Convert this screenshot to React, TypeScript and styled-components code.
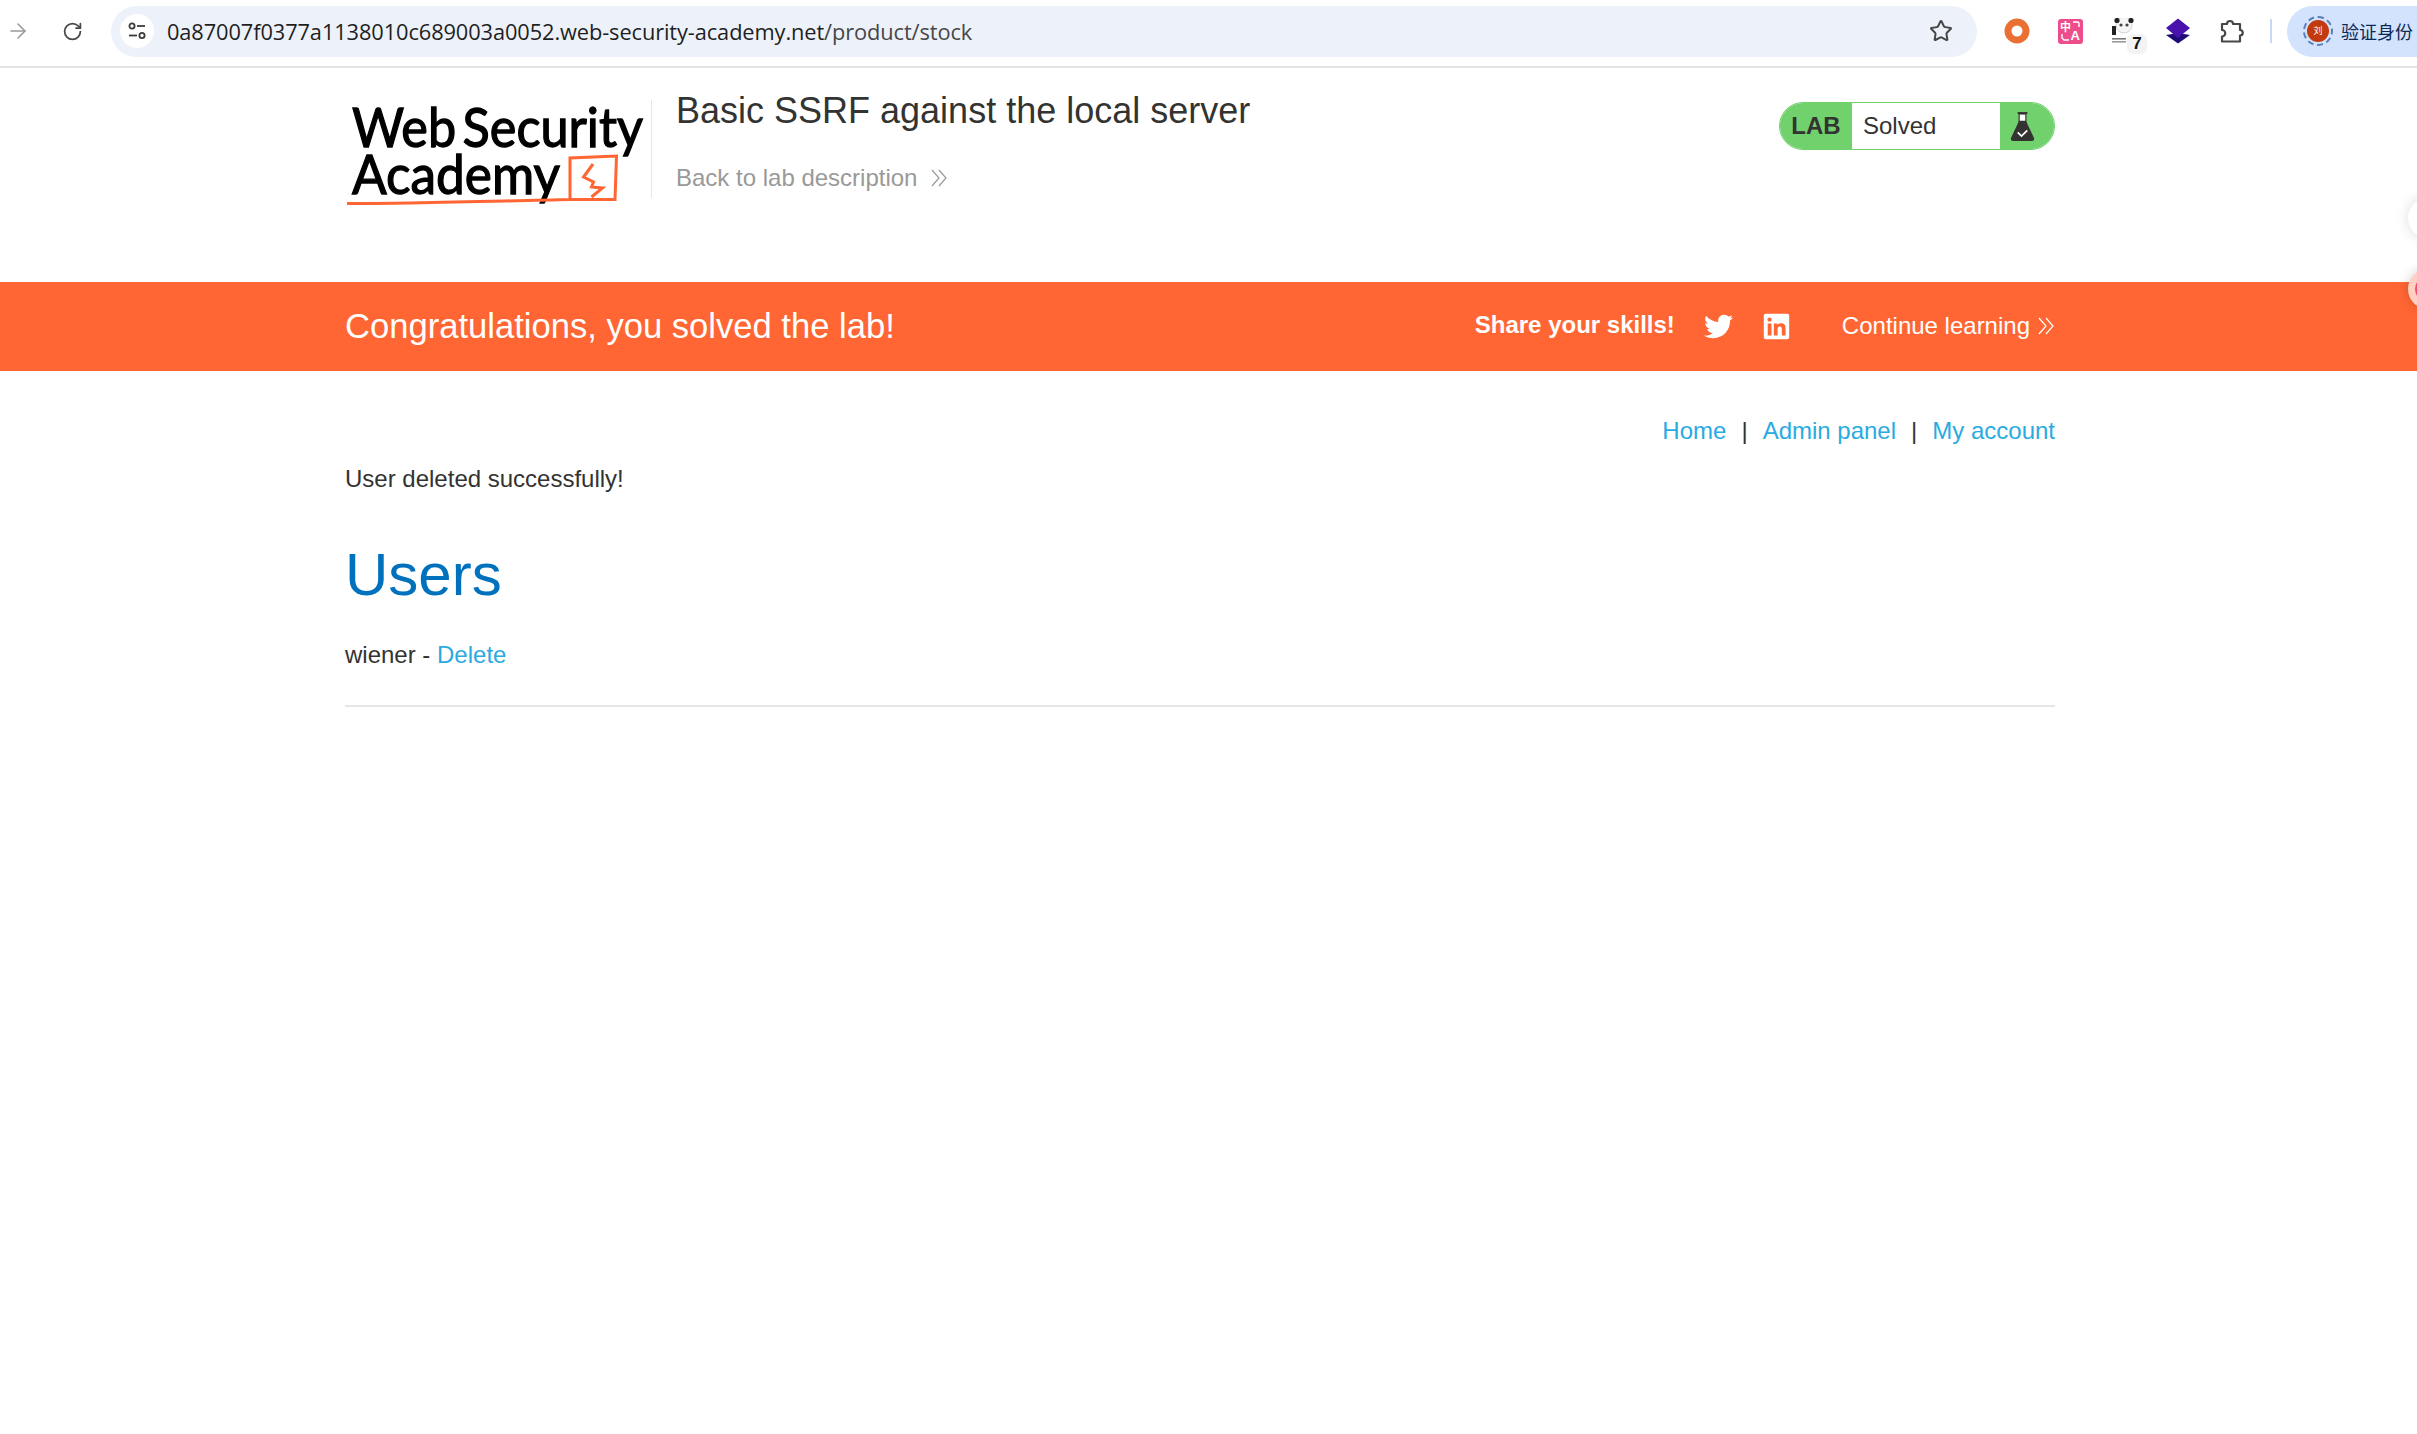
import styled, { createGlobalStyle } from "styled-components";
import { ArrowRight, RotateCw, Star } from "lucide-react";
import { FaTwitter, FaLinkedin } from "react-icons/fa";

const GlobalStyle = createGlobalStyle`
  html, body {
    margin: 0;
    padding: 0;
    background: #fff;
  }
  body {
    width: 2417px;
    height: 1434px;
    overflow: hidden;
    font-family: "Liberation Sans", Arial, sans-serif;
    font-size: 24px;
    color: #333332;
  }
`;

const Chevrons = ({ size, color }: { size: number; color: string }) => (
  <svg width={size} height={size} viewBox="0 0 18 18" fill="none" stroke={color} strokeWidth="1.2">
    <polyline points="2,1 9,9 2,17" />
    <polyline points="9,1 16,9 9,17" />
  </svg>
);

export default function App() {
  return (
    <Page>
      <GlobalStyle />
      <BrowserBar>
        <NavIcon $left={6} $width={24}>
          <ArrowRight size={24} color="#9a9a9a" strokeWidth={1.6} />
        </NavIcon>
        <NavIcon $left={30} $width={24}>
          <RotateCw size={21} color="#474747" strokeWidth={2} />
        </NavIcon>
        <UrlPill>
          <SiteInfo>
            <svg width="20" height="20" viewBox="0 0 20 20" fill="none" stroke="#3c3c3c" strokeWidth="1.8">
              <circle cx="5" cy="5" r="2.6" />
              <line x1="10" y1="5" x2="18" y2="5" />
              <line x1="2" y1="14.5" x2="10" y2="14.5" />
              <circle cx="15" cy="14.5" r="2.6" />
            </svg>
          </SiteInfo>
          <UrlText>
            0a87007f0377a1138010c689003a0052.web-security-academy.net<UrlPath>/product/stock</UrlPath>
          </UrlText>
          <Star size={24} color="#474747" strokeWidth={2} />
        </UrlPill>
        <Extensions>
          <svg width="26" height="26" viewBox="0 0 26 26">
            <circle cx="13" cy="13" r="9" fill="none" stroke="#e96f33" strokeWidth="7" />
          </svg>
          <TranslateIcon>
            <svg width="25" height="25" viewBox="0 0 25 25" fill="none" stroke="#fff" strokeWidth="1.4">
              <path d="M15 3 h5 l1 1 v4" />
              <path d="M4 15 v4 l2 2 h5" />
            </svg>
            <TranslateHan>中</TranslateHan>
            <TranslateLatin>A</TranslateLatin>
          </TranslateIcon>
          <PandaIcon>
            <svg width="24" height="26" viewBox="0 0 24 26">
              <circle cx="13" cy="7" r="8" fill="#f6f6f6" stroke="#bbb" strokeWidth="0.6" />
              <circle cx="6" cy="2.5" r="2.6" fill="#222" />
              <circle cx="20" cy="2.5" r="2.6" fill="#222" />
              <circle cx="10" cy="7" r="1.6" fill="#444" />
              <circle cx="16" cy="7" r="1.6" fill="#444" />
              <rect x="1" y="8" width="4" height="9" fill="#222" />
              <rect x="1" y="20" width="14" height="1.6" fill="#777" />
              <rect x="1" y="23" width="14" height="1.6" fill="#999" />
            </svg>
            <CountBadge>7</CountBadge>
          </PandaIcon>
          <svg width="26" height="26" viewBox="0 0 26 26">
            <polygon points="13,15 1,17 13,25.5 25,17" fill="#1f0a78" />
            <polygon points="13,0.5 1,10 13,20 25,10" fill="#4a12ac" />
          </svg>
          <svg width="26" height="26" viewBox="0 0 26 26" fill="none" stroke="#474747" strokeWidth="2.2" strokeLinejoin="round">
            <path d="M3 6 h5 a3 3 0 0 1 6 0 h7 v6 a2.6 2.6 0 0 1 0 5.5 v6 H3 v-5 a3.2 3.2 0 0 0 0 -6.5 z" />
          </svg>
        </Extensions>
        <BarDivider />
        <ProfileChip>
          <AvatarRing>
            <Avatar>刘</Avatar>
          </AvatarRing>
          <span>验证身份</span>
        </ProfileChip>
      </BrowserBar>

      <Container>
        <LabHeader>
          <Logo>
            <svg width="300" height="110" viewBox="0 0 300 110">
              <LogoText x="7" y="47" textLength="291" lengthAdjust="spacingAndGlyphs">
                Web Security
              </LogoText>
              <LogoText x="7" y="94" textLength="208" lengthAdjust="spacingAndGlyphs">
                Academy
              </LogoText>
              <path
                d="M2 103.5 C70 103.5 150 101 225 99.5 L225 58 L271.5 56 L270 99.5 L226 99.5"
                fill="none"
                stroke="#ff6633"
                strokeWidth="3"
              />
              <polyline
                points="248,64 238.5,77 248.5,82 246.5,87 257.5,88 246.5,97"
                fill="none"
                stroke="#ff6633"
                strokeWidth="3"
              />
            </svg>
          </Logo>
          <TitleBlock>
            <LabTitle>Basic SSRF against the local server</LabTitle>
            <BackLink>
              Back to lab description
              <Chevrons size={18} color="#999" />
            </BackLink>
          </TitleBlock>
          <LabBadge>
            <BadgeLabel>LAB</BadgeLabel>
            <BadgeStatus>Solved</BadgeStatus>
            <BadgeIcon>
              <svg width="25" height="31" viewBox="0 0 26 32">
                <rect x="8" y="1" width="10" height="2" fill="#333332" />
                <rect x="9.5" y="3" width="7" height="9" fill="#fff" stroke="#333332" strokeWidth="1.2" />
                <path d="M9.5 10 L1 28 Q0.5 31 3 31 H23 Q25.5 31 25 28 L16.5 10 Z" fill="#333332" />
                <polyline points="8,22 12,26 18,20" fill="none" stroke="#fff" strokeWidth="1.8" />
              </svg>
            </BadgeIcon>
          </LabBadge>
        </LabHeader>
      </Container>

      <Banner>
        <BannerInner>
          <BannerTitle>Congratulations, you solved the lab!</BannerTitle>
          <ShareGroup>
            <ShareLabel>Share your skills!</ShareLabel>
            <FaTwitter size={29} color="#fff" />
            <FaLinkedin size={29} color="#fff" />
          </ShareGroup>
          <ContinueLink>
            Continue learning
            <Chevrons size={18} color="#fff" />
          </ContinueLink>
        </BannerInner>
      </Banner>

      <Container>
        <TopLinks>
          <Link>Home</Link>
          <Sep>|</Sep>
          <Link>Admin panel</Link>
          <Sep>|</Sep>
          <Link>My account</Link>
        </TopLinks>
        <Message>User deleted successfully!</Message>
        <Heading>Users</Heading>
        <UserRow>
          wiener - <Link>Delete</Link>
        </UserRow>
        <Rule />
      </Container>

      <FloatingWhite />
      <FloatingPink />
    </Page>
  );
}

const Page = styled.div`
  position: relative;
  width: 2417px;
  height: 1434px;
  overflow: hidden;
  background: #fff;
`;

const BrowserBar = styled.div`
  display: flex;
  align-items: center;
  height: 62px;
  padding-bottom: 4px;
  border-bottom: 2px solid #e3e3e3;
  overflow: hidden;
`;

const NavIcon = styled.div<{ $left: number; $width: number }>`
  display: flex;
  justify-content: center;
  width: ${(p) => p.$width}px;
  margin-left: ${(p) => p.$left}px;
  flex: none;
`;

const UrlPill = styled.div`
  display: flex;
  align-items: center;
  width: 1866px;
  height: 51px;
  margin-left: 27px;
  padding: 0 24px 0 9px;
  box-sizing: border-box;
  background: #edf2fa;
  border-radius: 26px;
  flex: none;
`;

const SiteInfo = styled.div`
  display: flex;
  align-items: center;
  justify-content: center;
  width: 34px;
  height: 34px;
  background: #fff;
  border-radius: 50%;
  flex: none;
`;

const UrlText = styled.div`
  flex: 1;
  margin-left: 13px;
  font-family: "Open Sans", sans-serif;
  font-size: 21.8px;
  letter-spacing: -0.1px;
  color: #1f1f1f;
  white-space: nowrap;
`;

const UrlPath = styled.span`
  color: #474747;
`;

const Extensions = styled.div`
  display: flex;
  align-items: center;
  gap: 28px;
  margin-left: 27px;
  flex: none;
`;

const TranslateIcon = styled.div`
  position: relative;
  width: 25px;
  height: 25px;
  background: #ee4d8c;
  border-radius: 3px;
  color: #fff;
  font-weight: 700;
  line-height: 12px;
  svg {
    display: block;
  }
`;

const TranslateHan = styled.span`
  position: absolute;
  left: 2px;
  top: 1px;
  font-family: "Noto Sans CJK SC", sans-serif;
  font-size: 11px;
`;

const TranslateLatin = styled.span`
  position: absolute;
  right: 3px;
  bottom: 2px;
  font-family: "Liberation Sans", sans-serif;
  font-size: 13px;
`;

const PandaIcon = styled.div`
  position: relative;
  display: flex;
  width: 26px;
  height: 26px;
`;

const CountBadge = styled.div`
  position: absolute;
  right: -10px;
  bottom: -10px;
  width: 20px;
  height: 20px;
  border-radius: 6px;
  background: #f3f3f3;
  text-align: center;
  font-size: 17px;
  font-weight: 700;
  line-height: 20px;
  color: #111;
`;

const BarDivider = styled.div`
  width: 2px;
  height: 24px;
  margin-left: 25px;
  background: #c7d9f5;
  flex: none;
`;

const ProfileChip = styled.div`
  display: flex;
  align-items: center;
  gap: 8px;
  height: 51px;
  margin-left: 15px;
  padding-left: 16px;
  width: 200px;
  background: #d3e3fd;
  border-radius: 26px 0 0 26px;
  font-family: "Noto Sans CJK SC", sans-serif;
  font-size: 18px;
  white-space: nowrap;
  color: #0b2a55;
  flex: none;
`;

const AvatarRing = styled.div`
  display: flex;
  align-items: center;
  justify-content: center;
  width: 26px;
  height: 26px;
  border: 2px dashed #5b7fb5;
  border-radius: 50%;
  flex: none;
`;

const Avatar = styled.div`
  width: 22px;
  height: 22px;
  border-radius: 50%;
  background: #c23a0e;
  color: #fff;
  font-size: 9px;
  line-height: 22px;
  text-align: center;
`;

const Container = styled.div`
  width: 1710px;
  margin-left: 345px;
`;

const LabHeader = styled.div`
  display: flex;
  align-items: flex-start;
  height: 214px;
  box-sizing: border-box;
  padding-top: 21px;
`;

const Logo = styled.div`
  display: flex;
  width: 306px;
  height: 98px;
  margin-top: 11px;
  border-right: 1px solid #e6e6e6;
  flex: none;
  svg {
    overflow: visible;
  }
`;

const LogoText = styled.text`
  font-family: "Lato", "Open Sans", sans-serif;
  font-size: 55px;
  font-weight: 400;
  word-spacing: -7px;
  fill: #000;
  stroke: #000;
  stroke-width: 1.3px;
`;

const TitleBlock = styled.div`
  margin-left: 24px;
  flex: 1;
`;

const LabTitle = styled.h2`
  margin: 0;
  font-size: 36px;
  font-weight: 400;
  line-height: 44px;
  color: #333332;
`;

const BackLink = styled.div`
  display: flex;
  align-items: center;
  gap: 13px;
  margin-top: 27px;
  line-height: 36px;
  color: #999;
`;

const LabBadge = styled.div`
  display: flex;
  width: 276px;
  height: 48px;
  margin-top: 13px;
  border: 1px solid #70d16d;
  border-radius: 24px;
  box-sizing: border-box;
  overflow: hidden;
  flex: none;
`;

const BadgeLabel = styled.div`
  width: 72px;
  background: #70d16d;
  text-align: center;
  font-weight: 700;
  line-height: 46px;
  color: #333332;
  flex: none;
`;

const BadgeStatus = styled.div`
  flex: 1;
  padding-left: 11px;
  background: #fff;
  line-height: 46px;
  color: #333332;
`;

const BadgeIcon = styled.div`
  display: flex;
  align-items: center;
  justify-content: center;
  width: 54px;
  padding-right: 10px;
  box-sizing: border-box;
  background: #70d16d;
  flex: none;
`;

const Banner = styled.div`
  height: 89px;
  background: #ff6633;
  color: #fff;
`;

const BannerInner = styled.div`
  display: flex;
  align-items: center;
  width: 1710px;
  height: 100%;
  margin-left: 345px;
`;

const BannerTitle = styled.div`
  flex: 1;
  font-size: 34.6px;
`;

const ShareGroup = styled.div`
  display: flex;
  align-items: center;
  gap: 29px;
  flex: none;
`;

const ShareLabel = styled.div`
  font-weight: 700;
  margin-top: -4px;
`;

const ContinueLink = styled.div`
  display: flex;
  align-items: center;
  gap: 7px;
  margin-left: 51px;
  margin-top: -1px;
  flex: none;
`;

const TopLinks = styled.div`
  display: flex;
  justify-content: flex-end;
  gap: 15px;
  margin-top: 42px;
  line-height: 36px;
`;

const Link = styled.a`
  color: #29abe2;
`;

const Sep = styled.span`
  color: #333332;
`;

const Message = styled.p`
  margin: 12px 0 0;
  line-height: 36px;
`;

const Heading = styled.h1`
  margin: 38px 0 0;
  font-size: 60px;
  font-weight: 400;
  line-height: 80px;
  color: #0071bc;
`;

const UserRow = styled.p`
  margin: 22px 0 0;
  line-height: 36px;
`;

const Rule = styled.hr`
  height: 2px;
  margin: 32px 0 0;
  border: 0;
  background: #e6e6e6;
`;

const FloatingWhite = styled.div`
  position: absolute;
  left: 2408px;
  top: 198px;
  width: 40px;
  height: 40px;
  border-radius: 50%;
  background: #fff;
  box-shadow: 0 0 14px rgb(0 0 0 / 14%);
`;

const FloatingPink = styled.div`
  position: absolute;
  left: 2408px;
  top: 269px;
  width: 14px;
  height: 14px;
  padding: 6px;
  border: 7px solid #ffcfc2;
  border-radius: 50%;
  background: #f0506e;
  background-clip: padding-box;
  box-shadow: 0 0 12px rgb(0 0 0 / 18%);
`;
